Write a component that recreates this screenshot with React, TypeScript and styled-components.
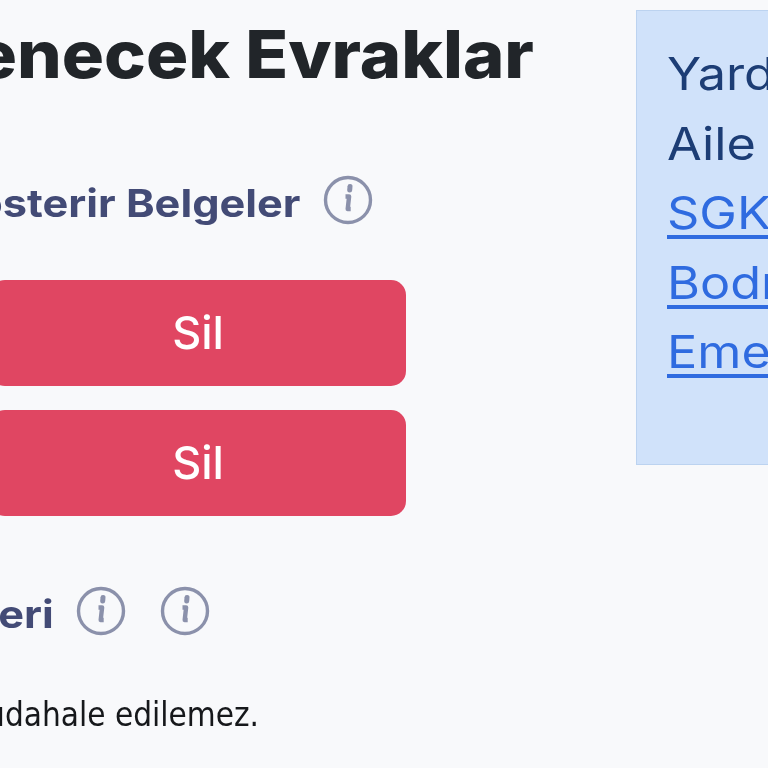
import React from "react";
import styled, { createGlobalStyle } from "styled-components";

const Global = createGlobalStyle`
  html, body { margin: 0; padding: 0; background: #f8f9fb; }
  #root { width: 768px; height: 768px; overflow: hidden; }
`;

const Page = styled.div`
  width: 768px;
  height: 768px;
  overflow: hidden;
  display: flex;
  justify-content: flex-end;
  align-items: flex-start;
  background: #f8f9fb;
  font-family: Inter, "Liberation Sans", sans-serif;
  filter: blur(0.4px);
`;

const Main = styled.main`
  flex: none;
  width: 1000px;
  padding-right: 102px;
  box-sizing: border-box;
  display: flex;
  flex-direction: column;
  align-items: flex-end;
`;

const Title = styled.h1`
  margin: 16px 0 0;
  font-size: 66px;
  line-height: 76px;
  font-weight: 800;
  color: #212529;
  white-space: nowrap;
  transform: scaleX(1.067);
  transform-origin: right center;
`;

const SectionRow = styled.div<{ $pr: number; $mt: number }>`
  display: flex;
  align-items: center;
  height: 48px;
  margin-top: ${(p) => p.$mt}px;
  padding-right: ${(p) => p.$pr}px;
`;

const SectionTitle = styled.h2`
  margin: 0;
  padding-top: 6px;
  font-size: 38px;
  font-weight: 700;
  color: #434b76;
  white-space: nowrap;
  transform: scaleX(1.14);
  transform-origin: right center;
`;

const Icons = styled.div`
  display: flex;
  gap: 34px;
  margin-left: 22px;
`;

const InfoIcon = styled.svg`
  flex: none;
  width: 50px;
  height: 50px;
  filter: blur(0.7px);
`;

const Buttons = styled.div`
  display: flex;
  flex-direction: column;
  gap: 24px;
  margin-top: 56px;
  padding-right: 128px;
`;

const DeleteButton = styled.button`
  width: 416px;
  height: 106px;
  padding: 0 0 2px;
  border: 0;
  border-radius: 15px;
  background: #e04662;
  color: #fff;
  font-family: inherit;
  font-size: 45px;
  font-weight: 500;
`;

const Note = styled.p`
  margin: 58px 0 0;
  padding-right: 275px;
  font-family: "DejaVu Sans", sans-serif;
  font-stretch: condensed;
  font-size: 33px;
  line-height: 44px;
  color: #16181b;
  white-space: nowrap;
`;

const Aside = styled.aside`
  flex: none;
  box-sizing: border-box;
  width: 600px;
  height: 455px;
  margin: 10px -468px 0 0;
  padding: 28px 30px;
  background: #d0e2fa;
  border: 1px solid #bcd3f0;
  font-size: 45px;
  line-height: 69.5px;
  color: #1c3d75;
  white-space: nowrap;
`;

const AsideBody = styled.div`
  transform: scaleX(1.12);
  transform-origin: left center;
`;

const AsideLine = styled.div``;

const AsideLink = styled.a`
  display: block;
  color: #2f6be0;
  text-decoration: underline;
  text-decoration-thickness: 4px;
  text-underline-offset: 6px;
`;

const Info = () => (
  <InfoIcon viewBox="0 0 50 50" fill="none" aria-hidden="true">
    <circle cx="25" cy="25" r="22.5" stroke="#8b91ab" strokeWidth="3.4" />
    <path d="M27 11.5l-.3 3.5" stroke="#8b91ab" strokeWidth="5" strokeLinecap="round" />
    <path d="M22.5 21.5h3.6l-1.4 12.5h3" stroke="#8b91ab" strokeWidth="4.4" strokeLinejoin="round" />
  </InfoIcon>
);

export default function App() {
  return (
    <Page>
      <Global />
      <Main>
        <Title>Yüklenecek Evraklar</Title>
        <SectionRow $pr={161} $mt={84}>
          <SectionTitle>Durumu Gösterir Belgeler</SectionTitle>
          <Icons>
            <Info />
          </Icons>
        </SectionRow>
        <Buttons>
          <DeleteButton>Sil</DeleteButton>
          <DeleteButton>Sil</DeleteButton>
        </Buttons>
        <SectionRow $pr={324} $mt={71}>
          <SectionTitle>Belgeleri</SectionTitle>
          <Icons>
            <Info />
            <Info />
          </Icons>
        </SectionRow>
        <Note>Bu alana müdahale edilemez.</Note>
      </Main>
      <Aside>
        <AsideBody>
          <AsideLine>Yardımcı Bağlantılar</AsideLine>
          <AsideLine>Aile ve Sosyal Hizmetler</AsideLine>
          <AsideLink href="#">SGK Sorgulama</AsideLink>
          <AsideLink href="#">Bodrum Belediyesi</AsideLink>
          <AsideLink href="#">Emekli Sandığı</AsideLink>
        </AsideBody>
      </Aside>
    </Page>
  );
}
